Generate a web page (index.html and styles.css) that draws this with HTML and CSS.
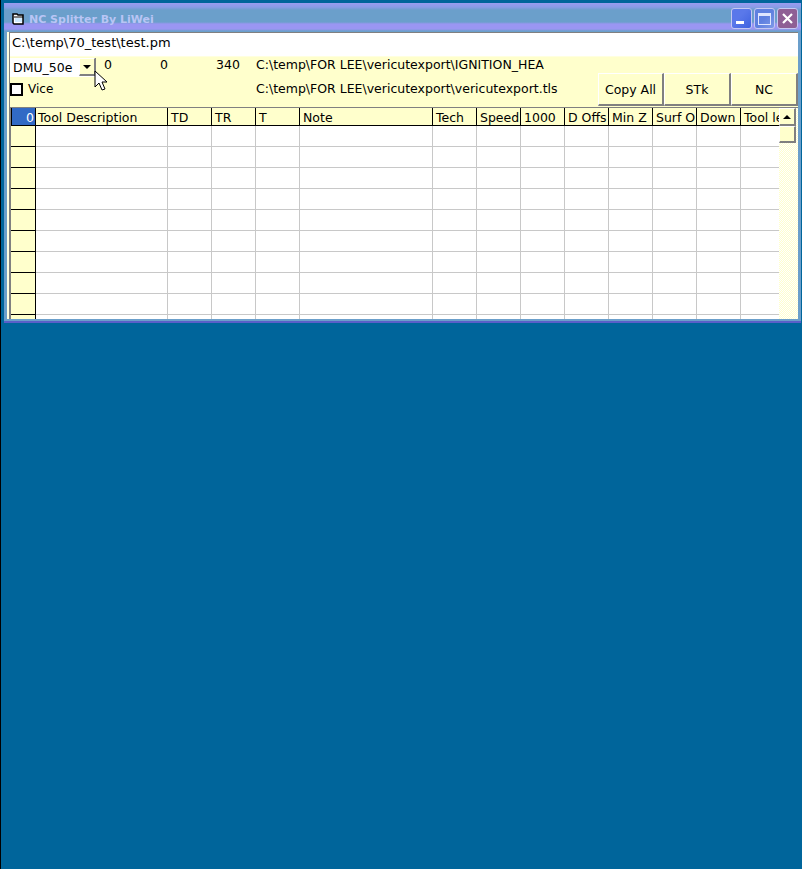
FILE: index.html
```html
<!DOCTYPE html>
<html lang="en">
<head>
<meta charset="utf-8">
<title>NC Splitter By LiWei</title>
<link rel="stylesheet" href="styles.css">
</head>
<body>
<div class="window">
  <div class="titlebar">
    <svg class="app-icon" width="12" height="12" viewBox="0 0 12 12"><path d="M1 1h4l1 1h5v9H2l-1-1z" fill="#fff" stroke="#000" stroke-width="1.5"/><path d="M2 4h9" stroke="#000"/><path d="M3 5h7v4H3z" fill="#cfeaff"/></svg>
    <span class="title">NC Splitter By LiWei</span>
    <div class="caption-buttons">
      <div class="cap cap-min"><span class="min-glyph"></span></div>
      <div class="cap cap-max"><span class="max-glyph"></span></div>
      <div class="cap cap-close"><svg width="13" height="13" viewBox="0 0 13 13"><path d="M2 2l9 9M11 2l-9 9" stroke="#fff" stroke-width="2.2"/></svg></div>
    </div>
  </div>
  <div class="client">
    <div class="pathbar">C:\temp\70_test\test.pm</div>
    <div class="panel">
      <div class="combo"><span class="combo-text">DMU_50e</span><span class="combo-btn"><i class="arrow-down"></i></span></div>
      <span class="num">0</span>
      <span class="num">0</span>
      <span class="num">340</span>
      <span class="path clip">C:\temp\FOR LEE\vericutexport\IGNITION_HEAD</span>
      <label class="vice"><span class="check"></span>Vice</label>
      <span class="path path2">C:\temp\FOR LEE\vericutexport\vericutexport.tls</span>
      <div class="buttons">
        <div class="btn">Copy All</div>
        <div class="btn">STk</div>
        <div class="btn">NC</div>
      </div>
    </div>
    <div class="grid-wrap">
      <table class="grid">
        <colgroup>
          <col class="c-row"><col class="c-desc"><col class="c-n"><col class="c-n"><col class="c-n"><col class="c-note"><col class="c-n"><col class="c-n"><col class="c-n"><col class="c-n"><col class="c-n"><col class="c-n"><col class="c-n"><col class="c-last">
        </colgroup>
        <thead>
          <tr><th class="corner">0</th><th class="h-desc">Tool Description</th><th>TD</th><th>TR</th><th>T</th><th>Note</th><th>Tech</th><th>Speed</th><th>1000</th><th>D Offs</th><th>Min Z</th><th>Surf O</th><th>Down</th><th>Tool le</th></tr>
        </thead>
        <tbody>
          <tr><th></th><td></td><td></td><td></td><td></td><td></td><td></td><td></td><td></td><td></td><td></td><td></td><td></td><td></td></tr>
          <tr><th></th><td></td><td></td><td></td><td></td><td></td><td></td><td></td><td></td><td></td><td></td><td></td><td></td><td></td></tr>
          <tr><th></th><td></td><td></td><td></td><td></td><td></td><td></td><td></td><td></td><td></td><td></td><td></td><td></td><td></td></tr>
          <tr><th></th><td></td><td></td><td></td><td></td><td></td><td></td><td></td><td></td><td></td><td></td><td></td><td></td><td></td></tr>
          <tr><th></th><td></td><td></td><td></td><td></td><td></td><td></td><td></td><td></td><td></td><td></td><td></td><td></td><td></td></tr>
          <tr><th></th><td></td><td></td><td></td><td></td><td></td><td></td><td></td><td></td><td></td><td></td><td></td><td></td><td></td></tr>
          <tr><th></th><td></td><td></td><td></td><td></td><td></td><td></td><td></td><td></td><td></td><td></td><td></td><td></td><td></td></tr>
          <tr><th></th><td></td><td></td><td></td><td></td><td></td><td></td><td></td><td></td><td></td><td></td><td></td><td></td><td></td></tr>
          <tr><th></th><td></td><td></td><td></td><td></td><td></td><td></td><td></td><td></td><td></td><td></td><td></td><td></td><td></td></tr>
          <tr><th></th><td></td><td></td><td></td><td></td><td></td><td></td><td></td><td></td><td></td><td></td><td></td><td></td><td></td></tr>
        </tbody>
      </table>
      <div class="vscroll">
        <div class="sb-btn"><i class="arrow-up"></i></div>
        <div class="sb-thumb"></div>
      </div>
    </div>
  </div>
</div>
<svg class="cursor" width="14" height="22" viewBox="0 0 14 22"><path d="M1 1v16l4-4 3 7 3-1-3-7h5z" fill="#fff" stroke="#000" stroke-width="1"/></svg>
</body>
</html>
```

FILE: styles.css
```css
* { box-sizing: border-box; }
html, body { margin: 0; height: 100%; }
body {
  background: #00659b;
  border-left: 1px solid #000;
  font: 12.5px "DejaVu Sans", sans-serif;
  color: #000;
  position: relative;
  overflow: hidden;
}
.window {
  height: 323px;
  margin-left: 3px;
  margin-right: 1px;
  padding: 0 3px 4px 4px;
  background: linear-gradient(#00659b 0, #00659b 3px, #6b9fcb 3px);
  display: flex;
  flex-direction: column;
  box-shadow: inset 0 -2px 0 #5a5fc8;
}
.titlebar {
  height: 29px;
  margin: 3px -3px 0 -4px;
  padding: 3px 3px 0 8px;
  flex: none;
  display: flex;
  align-items: center;
  background: linear-gradient(#9a9cf0 0, #8a9be8 4px, #6b9fcb 7px, #6b9fcb 19px, #9a96f2 21px, #9a96f2 26px, #6b9fcb 28px);
}
.app-icon { flex: none; margin-right: 5px; margin-top: -1px; }
.title { font-size: 11px; font-weight: bold; color: #b9c5f5; }
.caption-buttons { margin-left: auto; display: flex; gap: 2px; margin-top: -1px; }
.cap {
  width: 21px;
  height: 21px;
  border: 1px solid #c5c8f2;
  border-radius: 3px;
  display: flex;
  align-items: center;
  justify-content: center;
  background: linear-gradient(135deg, #5a78ea 40%, #3f62e0);
  position: relative;
}
.cap-max { background: linear-gradient(135deg, #5f80e0 50%, #7f9ae8); }
.cap-close { background: #8f5f95; }
.min-glyph { width: 8px; height: 3px; background: #fff; margin: 8px 4px 0 0; }
.max-glyph { width: 13px; height: 12px; border: 1px solid #dfe6ff; border-top-width: 3px; }
.client {
  flex: 1;
  min-height: 0;
  background: #ffffcc;
  border-top: 1px solid #808080;
  border-left: 1px solid #808080;
  display: flex;
  flex-direction: column;
  overflow: hidden;
  margin-left: 1px;
  box-shadow: -2px 0 0 #ffffe0;
}
.pathbar {
  height: 24px;
  flex: none;
  background: #fff;
  padding: 2px 0 0 2px;
  border-bottom: 1px solid #ffffe0;
  white-space: nowrap;
  font-size: 13px;
}
.panel {
  height: 50px;
  flex: none;
  display: grid;
  grid-template-columns: 94px 56px 56px 40px 342px 1fr;
  grid-template-rows: 24px 26px;
  position: relative;
}
.combo {
  width: 86px;
  height: 19px;
  margin-top: 1px;
  background: #fff;
  display: flex;
  justify-content: space-between;
  border-right: 1px solid #808080;
}
.combo-text { padding: 2px 0 0 3px; }
.combo-btn {
  width: 16px;
  height: 18px;
  background: #ffffcc;
  border-right: 1px solid #808080;
  border-bottom: 2px solid #808080;
  border-top: 1px solid #fff;
  border-left: 1px solid #fff;
  display: flex;
  align-items: center;
  justify-content: center;
}
.arrow-down { width: 0; height: 0; border: 4px solid transparent; border-top-color: #000; border-bottom: 0; }
.arrow-up { width: 0; height: 0; border: 4px solid transparent; border-bottom-color: #000; border-top: 0; }
.num { padding-top: 0; }
.path { white-space: nowrap; }
.clip { width: 288px; overflow: hidden; grid-column: 5 / 7; }
.vice {
  grid-column: 1 / 5;
  display: flex;
  align-items: center;
  gap: 5px;
  height: 14px;
  margin-top: 1px;
  font-size: 12px;
}
.check { width: 13px; height: 13px; border: 2px solid #000; background: #fff; }
.path2 { grid-column: 5; align-self: start; padding-top: 0; }
.buttons {
  grid-column: 6;
  grid-row: 2;
  justify-self: end;
  align-self: start;
  display: flex;
  margin-top: -8px;
}
.btn {
  width: 67px;
  height: 33px;
  background: #ffffcc;
  border: 1px solid #808080;
  border-top-color: #fff;
  border-left-color: #fff;
  border-right-width: 2px;
  border-bottom-width: 2px;
  display: flex;
  align-items: center;
  justify-content: center;
}
.btn:first-child { width: 66px; }
.grid-wrap {
  flex: 1;
  min-height: 0;
  display: flex;
  align-items: flex-start;
  overflow: hidden;
  border-top: 1px solid #808080;
  border-left: 1px solid #808080;
}
.grid {
  border-collapse: separate;
  border-spacing: 0;
  table-layout: fixed;
  width: 768px;
  flex: none;
  background: #fff;
}
.c-row { width: 25px; }
.c-desc { width: 132px; }
.c-n { width: 44px; }
.c-note { width: 133px; }
.c-last { width: 38px; }
.grid th, .grid td { padding: 0; overflow: hidden; white-space: nowrap; }
.grid thead th {
  height: 18px;
  background: #ffffcc;
  font-weight: normal;
  text-align: left;
  padding: 1px 0 0 3px;
  border-right: 1px solid #000;
  border-bottom: 1px solid #000;
}
.grid thead .h-desc { padding-left: 2px; }
.grid thead th:last-child { border-right: 0; }
.grid thead .corner {
  background: #316ac5;
  color: #fff;
  text-align: right;
  padding: 1px 1px 0 0;
  border-left: 1px solid #000;
}
.grid tbody th {
  height: 21px;
  background: #ffffcc;
  border-right: 1px solid #000;
  border-bottom: 1px solid #000;
}
.grid td {
  height: 21px;
  border-right: 1px solid #c8c8c8;
  border-bottom: 1px solid #c8c8c8;
}
.grid td:last-child { border-right: 0; }
.vscroll {
  width: 19px;
  flex: none;
  align-self: stretch;
  background-color: #ffffcc;
  background-image: conic-gradient(#fff 25%, transparent 0 50%, #fff 0 75%, transparent 0);
  background-size: 2px 2px;
}
.sb-btn, .sb-thumb {
  width: 17px;
  background: #ffffcc;
  border: 1px solid #808080;
  border-top-color: #fff;
  border-left-color: #fff;
  border-right-width: 2px;
  border-bottom-width: 2px;
}
.sb-btn { height: 18px; display: flex; align-items: center; justify-content: center; }
.sb-thumb { height: 17px; }
.cursor { position: absolute; left: 93px; top: 70px; }
```
